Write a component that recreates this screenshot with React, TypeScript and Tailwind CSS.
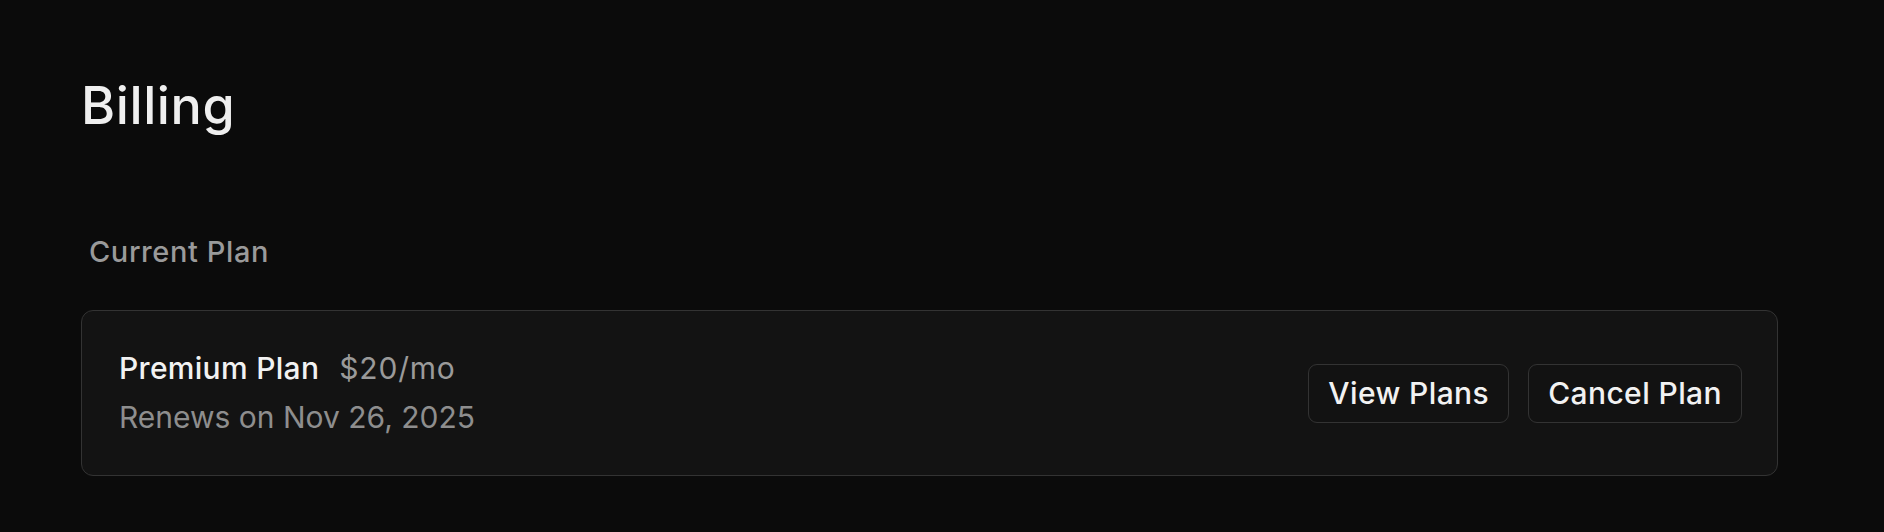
const font = { fontFamily: 'Inter, "Noto Sans", sans-serif' };

const buttonClasses = [
  'h-[59px] px-[19px] rounded-[9px]',
  'border border-[#333333] bg-[#121212]',
  'text-[30px] leading-[45px] font-medium tracking-[0.4px] text-[#f2f2f2]',
].join(' ');

const PlanCard = () => (
  <div className="w-[1697px] flex items-center justify-between rounded-[12px] border border-[#333333] bg-[#131313] pl-[37px] pr-[35px] py-[35px]">
    <div className="flex flex-col gap-[4px]">
      <div className="flex items-baseline gap-[20px] leading-[45px] text-[30px]">
        <span className="font-medium tracking-[0.3px] text-[#f2f2f2]">Premium Plan</span>
        <span className="tracking-[0.8px] text-[#9a9a9a]">$20/mo</span>
      </div>
      <p className="text-[30px] leading-[45px] text-[#8e8e8e]">Renews on Nov 26, 2025</p>
    </div>
    <div className="flex items-center gap-[19px]">
      <button className={buttonClasses}>View Plans</button>
      <button className={buttonClasses}>Cancel Plan</button>
    </div>
  </div>
);

export default function App() {
  return (
    <div className="w-[1884px] h-[532px] bg-[#0b0b0b] pl-[81px] pt-[75px] overflow-hidden" style={font}>
      <h1 className="text-[52px] leading-[62px] font-medium tracking-[0.6px] text-[#efefef]">Billing</h1>
      <h2 className="mt-[92px] pl-[8px] text-[29px] leading-[45px] font-medium tracking-[0.6px] text-[#9a9a9a]">Current Plan</h2>
      <div className="mt-[36px]">
        <PlanCard />
      </div>
    </div>
  );
}
